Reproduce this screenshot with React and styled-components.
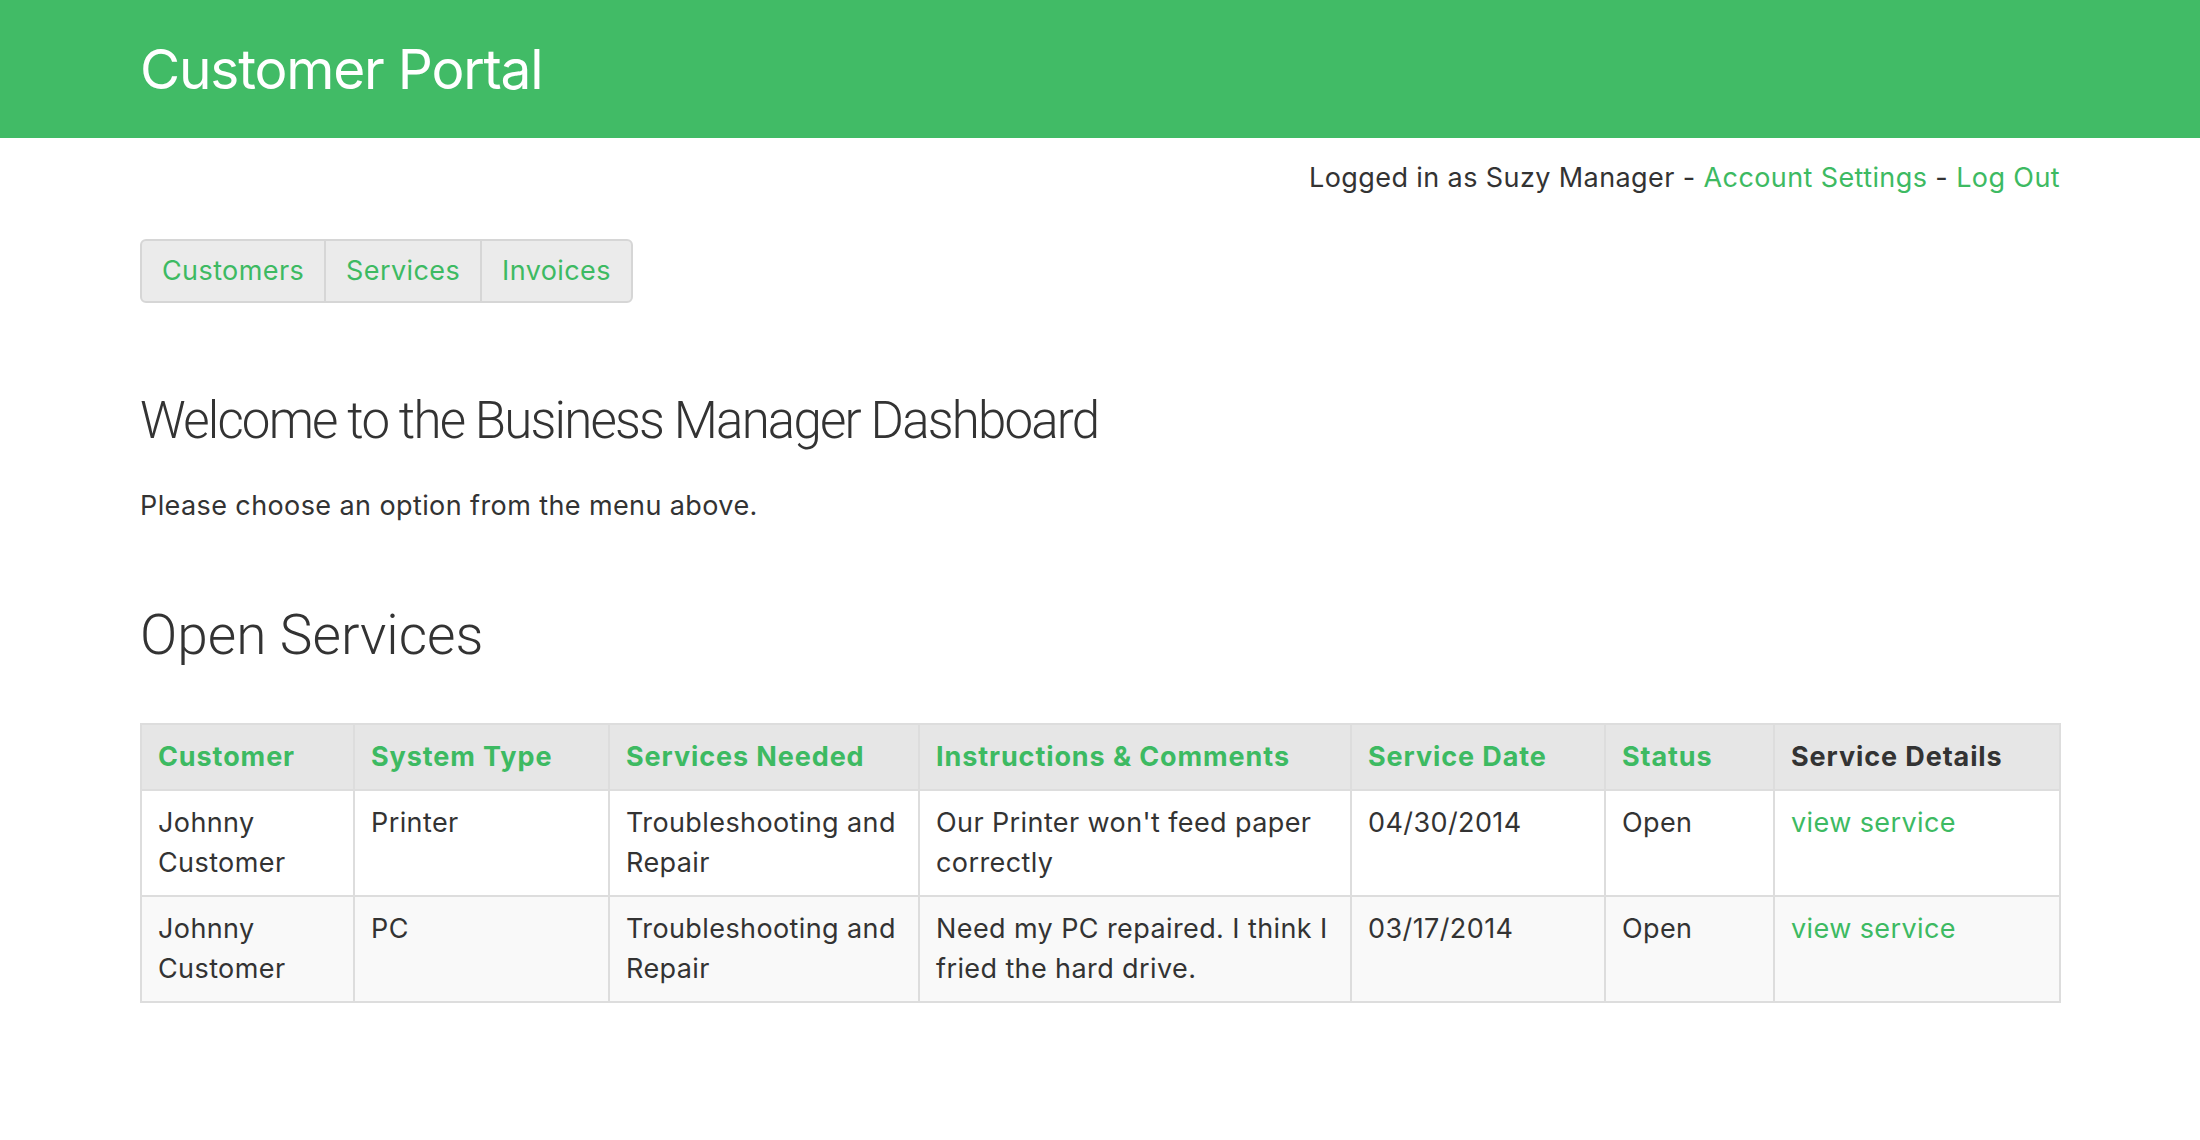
import styled, { createGlobalStyle } from 'styled-components';

const GlobalStyle = createGlobalStyle`
  body {
    margin: 0;
    background: #fff;
    color: #333;
    font-family: Inter, "Noto Sans", "Liberation Sans", sans-serif;
    font-size: 27px;
    line-height: 40px;
    letter-spacing: 0.4px;
  }
  * {
    box-sizing: border-box;
  }
`;

const green = '#3dba62';

const Header = styled.header`
  background: #41bb66;
  height: 138px;
  display: flex;
  align-items: center;
`;

const Container = styled.div`
  width: 1920px;
  margin: 0 auto;
`;

const Brand = styled.h1`
  margin: 0;
  color: #fff;
  font-size: 55px;
  font-weight: 400;
  line-height: 1;
  letter-spacing: -1.2px;
`;

const UserBar = styled.div`
  margin-top: 20px;
  text-align: right;
`;

const Link = styled.a`
  color: ${green};
  text-decoration: none;
  cursor: pointer;
`;

const NavGroup = styled.nav`
  display: inline-flex;
  margin-top: 41px;
  border: 2px solid #d6d6d6;
  border-radius: 6px;
  background: #ebebeb;
  overflow: hidden;
`;

const NavButton = styled.a`
  padding: 10px 20px;
  color: ${green};
  text-decoration: none;
  border-left: ${(p) => (p.$first ? 'none' : '2px solid #d6d6d6')};
`;

const Welcome = styled.h3`
  margin: 89px 0 0;
  font-family: Roboto, Inter, sans-serif;
  font-size: 51px;
  font-weight: 300;
  line-height: 57px;
  letter-spacing: -1.8px;
`;

const Lead = styled.p`
  margin: 37px 0 0;
`;

const SectionTitle = styled.h2`
  margin: 79px 0 0;
  font-family: Roboto, Inter, sans-serif;
  font-size: 55px;
  font-weight: 300;
  line-height: 60px;
  letter-spacing: 0;
`;

const Table = styled.table`
  margin-top: 58px;
  width: 100%;
  border-collapse: collapse;
  border: 2px solid #ddd;
  table-layout: fixed;
`;

const Th = styled.th`
  width: ${(p) => p.$w}px;
  text-align: left;
  font-weight: 700;
  letter-spacing: 0.9px;
  padding: 12px 16px;
  background: #e6e6e6;
  border: 2px solid #ddd;
  color: ${(p) => (p.$plain ? '#333' : green)};
`;

const Row = styled.tr`
  background: ${(p) => (p.$striped ? '#f9f9f9' : '#fff')};
`;

const Td = styled.td`
  vertical-align: top;
  padding: 12px 16px;
  border: 2px solid #ddd;
`;

const columns = [
  { label: 'Customer', w: 213 },
  { label: 'System Type', w: 255 },
  { label: 'Services Needed', w: 310 },
  { label: 'Instructions & Comments', w: 432 },
  { label: 'Service Date', w: 254 },
  { label: 'Status', w: 169 },
  { label: 'Service Details', w: 286, plain: true },
];

const services = [
  {
    customer: 'Johnny Customer',
    type: 'Printer',
    needed: 'Troubleshooting and Repair',
    comments: "Our Printer won't feed paper correctly",
    date: '04/30/2014',
    status: 'Open',
  },
  {
    customer: 'Johnny Customer',
    type: 'PC',
    needed: 'Troubleshooting and Repair',
    comments: 'Need my PC repaired. I think I fried the hard drive.',
    date: '03/17/2014',
    status: 'Open',
  },
];

export default function App() {
  return (
    <>
      <GlobalStyle />
      <Header>
        <Container>
          <Brand>Customer Portal</Brand>
        </Container>
      </Header>
      <Container>
        <UserBar>
          Logged in as Suzy Manager - <Link>Account Settings</Link> - <Link>Log Out</Link>
        </UserBar>
        <NavGroup>
          <NavButton $first>Customers</NavButton>
          <NavButton>Services</NavButton>
          <NavButton>Invoices</NavButton>
        </NavGroup>

        <Welcome>Welcome to the Business Manager Dashboard</Welcome>
        <Lead>Please choose an option from the menu above.</Lead>

        <SectionTitle>Open Services</SectionTitle>
        <Table>
          <thead>
            <tr>
              {columns.map((c) => (
                <Th key={c.label} $w={c.w} $plain={c.plain}>
                  {c.label}
                </Th>
              ))}
            </tr>
          </thead>
          <tbody>
            {services.map((s, i) => (
              <Row key={i} $striped={i % 2 === 1}>
                <Td>{s.customer}</Td>
                <Td>{s.type}</Td>
                <Td>{s.needed}</Td>
                <Td>{s.comments}</Td>
                <Td>{s.date}</Td>
                <Td>{s.status}</Td>
                <Td>
                  <Link>view service</Link>
                </Td>
              </Row>
            ))}
          </tbody>
        </Table>
      </Container>
    </>
  );
}
